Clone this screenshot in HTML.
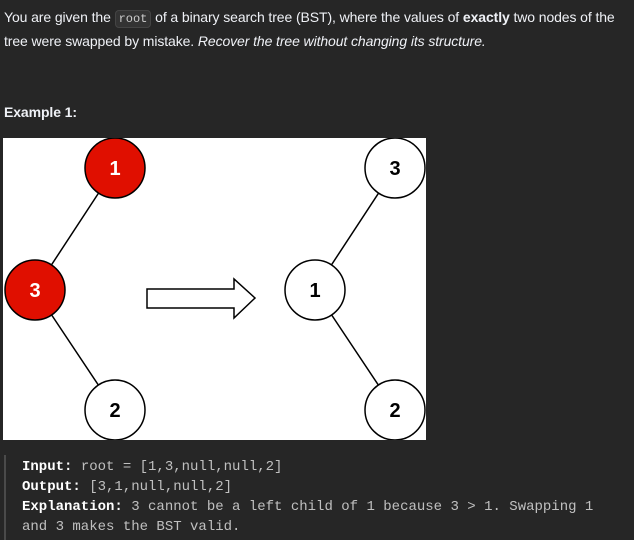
<!DOCTYPE html>
<html><head><meta charset="utf-8"><style>
body{margin:0;background:#262626;width:634px;height:540px;overflow:hidden;font-family:"Liberation Sans",sans-serif;color:#eff1f6;}
p{margin:0;position:absolute;left:4px;font-size:14px;line-height:22px;letter-spacing:-0.1px;}
code{font-family:"Liberation Mono",monospace;font-size:12px;background:#333;border:1px solid #444;border-radius:4px;padding:1px 3px;color:#ccc;letter-spacing:0}
.pre{position:absolute;left:4px;top:455px;width:626px;height:85px;border-left:2px solid #4a4a4a;font-family:"Liberation Mono",monospace;font-size:14px;line-height:20px;color:#c0c0c0;padding-left:16px;box-sizing:border-box;padding-top:2px}
.pre b{color:#fff}
</style></head><body>
<p style="top:6px;width:624px">You are given the <code>root</code> of a binary search tree (BST), where the values of <b>exactly</b> two nodes of the<br>tree were swapped by mistake. <i>Recover the tree without changing its structure.</i></p>
<p style="top:101px;font-weight:bold">Example 1:</p>
<svg style="position:absolute;left:3px;top:138px" width="423" height="302" viewBox="3 138 423 302">
<rect x="3" y="138" width="423" height="302" fill="#fff"/>
<g stroke="#000" stroke-width="1.5">
<line x1="115" y1="168" x2="35" y2="290"/><line x1="35" y1="290" x2="115" y2="410"/>
<line x1="395" y1="168" x2="315" y2="290"/><line x1="315" y1="290" x2="395" y2="410"/>
<circle cx="115" cy="168" r="30" fill="#e00f00"/>
<circle cx="35" cy="290" r="30" fill="#e00f00"/>
<circle cx="115" cy="410" r="30" fill="#fff"/>
<circle cx="395" cy="168" r="30" fill="#fff"/>
<circle cx="315" cy="290" r="30" fill="#fff"/>
<circle cx="395" cy="410" r="30" fill="#fff"/>
<polygon points="147,289 234,289 234,279 255,298 234,318 234,308 147,308" fill="#fff"/>
</g>
<g font-family="Liberation Sans" font-weight="bold" font-size="20" text-anchor="middle">
<text x="115" y="175" fill="#fff">1</text><text x="35" y="297" fill="#fff">3</text>
<text x="115" y="417" fill="#000">2</text><text x="395" y="175" fill="#000">3</text>
<text x="315" y="297" fill="#000">1</text><text x="395" y="417" fill="#000">2</text>
</g></svg>
<div class="pre"><b>Input:</b> root = [1,3,null,null,2]<br><b>Output:</b> [3,1,null,null,2]<br><b>Explanation:</b> 3 cannot be a left child of 1 because 3 &gt; 1. Swapping 1<br>and 3 makes the BST valid.</div>
</body></html>
